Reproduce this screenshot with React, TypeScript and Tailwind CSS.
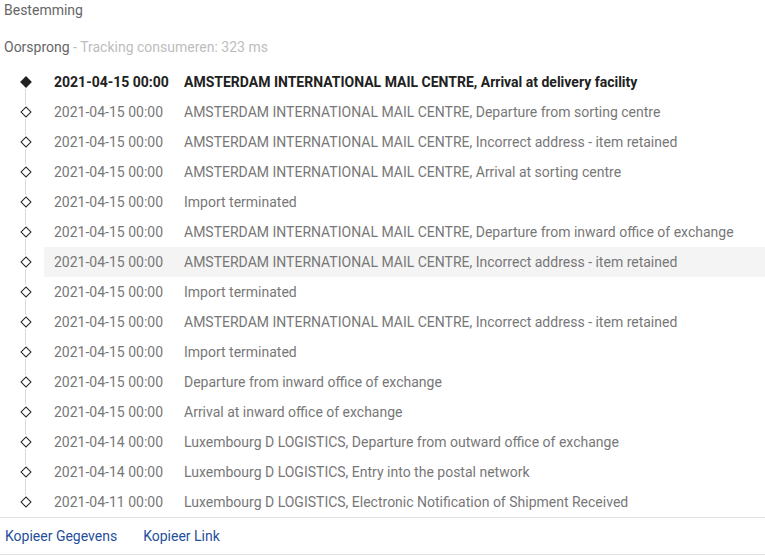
import React from "react";

const events = [
  { date: "2021-04-15 00:00", text: "AMSTERDAM INTERNATIONAL MAIL CENTRE, Arrival at delivery facility" },
  { date: "2021-04-15 00:00", text: "AMSTERDAM INTERNATIONAL MAIL CENTRE, Departure from sorting centre" },
  { date: "2021-04-15 00:00", text: "AMSTERDAM INTERNATIONAL MAIL CENTRE, Incorrect address - item retained" },
  { date: "2021-04-15 00:00", text: "AMSTERDAM INTERNATIONAL MAIL CENTRE, Arrival at sorting centre" },
  { date: "2021-04-15 00:00", text: "Import terminated" },
  { date: "2021-04-15 00:00", text: "AMSTERDAM INTERNATIONAL MAIL CENTRE, Departure from inward office of exchange" },
  { date: "2021-04-15 00:00", text: "AMSTERDAM INTERNATIONAL MAIL CENTRE, Incorrect address - item retained" },
  { date: "2021-04-15 00:00", text: "Import terminated" },
  { date: "2021-04-15 00:00", text: "AMSTERDAM INTERNATIONAL MAIL CENTRE, Incorrect address - item retained" },
  { date: "2021-04-15 00:00", text: "Import terminated" },
  { date: "2021-04-15 00:00", text: "Departure from inward office of exchange" },
  { date: "2021-04-15 00:00", text: "Arrival at inward office of exchange" },
  { date: "2021-04-14 00:00", text: "Luxembourg D LOGISTICS, Departure from outward office of exchange" },
  { date: "2021-04-14 00:00", text: "Luxembourg D LOGISTICS, Entry into the postal network" },
  { date: "2021-04-11 00:00", text: "Luxembourg D LOGISTICS, Electronic Notification of Shipment Received" },
];

export default function App() {
  return (
    <div className="w-[765px] h-[556px] bg-white text-[14px] font-['Roboto',sans-serif] overflow-hidden">
      <div className="pl-1 h-5 leading-5 text-[#666]">Bestemming</div>
      <div className="pl-1 mt-[17px] h-5 leading-5 text-[#666]">
        Oorsprong <span className="text-[#bdbdbd]">- Tracking consumeren: 323 ms</span>
      </div>

      {/* Timeline */}
      <div className="mt-[10px]">
        {events.map((ev, i) => {
          const first = i === 0;
          const last = i === events.length - 1;
          return (
            <div key={i} className="flex h-[30px]">
              <div className="w-[44px] flex flex-col items-center pl-[7px]">
                <div className={`w-px h-[8px] ${first ? "" : "bg-[#d9d9d9]"}`} />
                <div className="h-[14px] flex items-center justify-center">
                  <div
                    className={`w-[8px] h-[8px] rotate-45 border-[1.5px] border-[#222] ${first ? "bg-[#222]" : "bg-white"}`}
                  />
                </div>
                <div className={`w-px h-[8px] ${last ? "" : "bg-[#d9d9d9]"}`} />
              </div>
              <div
                className={`flex flex-1 items-center pl-[10px] ${i === 6 ? "bg-[#f4f4f4]" : ""} ${first ? "font-bold text-[#212121]" : "text-[#777]"}`}
              >
                <span className="w-[130px] shrink-0">{ev.date}</span>
                <span className="whitespace-nowrap">{ev.text}</span>
              </div>
            </div>
          );
        })}
      </div>

      {/* Footer */}
      <div className="border-t border-b border-[#e0e0e0] h-[38px] flex items-center gap-[26px] pl-[5px] text-[#1f4f9c]">
        <span>Kopieer Gegevens</span>
        <span>Kopieer Link</span>
      </div>
    </div>
  );
}
